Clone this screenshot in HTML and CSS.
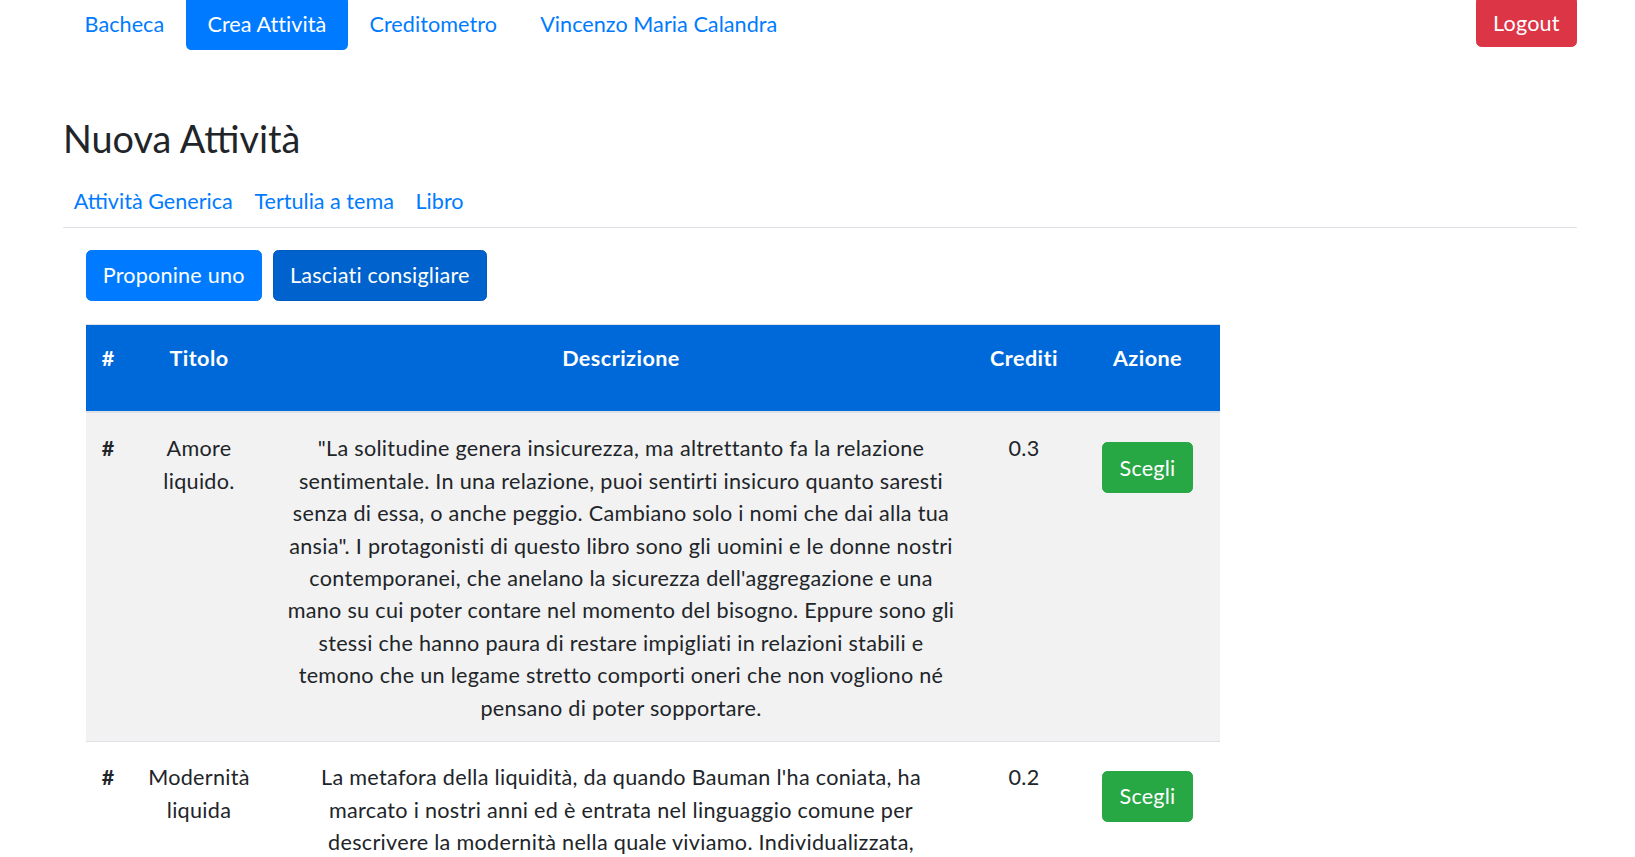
FILE: index.html
```html
<!DOCTYPE html>
<html lang="it">
<head>
<meta charset="utf-8">
<title>Nuova Attività</title>
<link rel="stylesheet" href="styles.css">
</head>
<body>
<div class="page">
  <header class="topbar">
    <nav class="mainnav">
      <a class="navlink" href="#">Bacheca</a>
      <a class="navlink active" href="#">Crea Attività</a>
      <a class="navlink" href="#">Creditometro</a>
      <a class="navlink" href="#">Vincenzo Maria Calandra</a>
    </nav>
    <a class="btn btn-danger" href="#">Logout</a>
  </header>

  <h2 class="title">Nuova Attività</h2>

  <nav class="tabs">
    <a class="tab" href="#">Attività Generica</a>
    <a class="tab" href="#">Tertulia a tema</a>
    <a class="tab" href="#">Libro</a>
  </nav>

  <section class="tabcontent">
    <div class="actions">
      <a class="btn btn-primary" href="#">Proponine uno</a>
      <a class="btn btn-primary pressed" href="#">Lasciati consigliare</a>
    </div>

    <table class="books">
      <colgroup>
        <col class="c-num"><col class="c-title"><col class="c-desc"><col class="c-cred"><col class="c-act">
      </colgroup>
      <thead>
        <tr>
          <th class="left">#</th>
          <th>Titolo</th>
          <th>Descrizione</th>
          <th>Crediti</th>
          <th>Azione</th>
        </tr>
      </thead>
      <tbody>
        <tr class="odd">
          <td class="left bold">#</td>
          <td>Amore liquido.</td>
          <td>"La solitudine genera insicurezza, ma altrettanto fa la relazione sentimentale. In una relazione, puoi sentirti insicuro quanto saresti senza di essa, o anche peggio. Cambiano solo i nomi che dai alla tua ansia". I protagonisti di questo libro sono gli uomini e le donne nostri contemporanei, che anelano la sicurezza dell'aggregazione e una mano su cui poter contare nel momento del bisogno. Eppure sono gli stessi che hanno paura di restare impigliati in relazioni stabili e temono che un legame stretto comporti oneri che non vogliono né pensano di poter sopportare.</td>
          <td>0.3</td>
          <td><a class="btn btn-success" href="#">Scegli</a></td>
        </tr>
        <tr>
          <td class="left bold">#</td>
          <td>Modernità liquida</td>
          <td>La metafora della liquidità, da quando Bauman l'ha coniata, ha marcato i nostri anni ed è entrata nel linguaggio comune per descrivere la modernità nella quale viviamo. Individualizzata, privatizzata, incerta, flessibile, vulnerabile: la modernità liquida è un'epoca in cui le forme sociali si dissolvono più in fretta di quanto se ne creino di nuove.</td>
          <td>0.2</td>
          <td><a class="btn btn-success" href="#">Scegli</a></td>
        </tr>
      </tbody>
    </table>
  </section>
</div>
</body>
</html>
```

FILE: styles.css
```css
* { box-sizing: border-box; }

html, body {
  margin: 0;
  padding: 0;
  background: #ffffff;
}

body {
  font-family: "Segoe UI", Lato, "Noto Sans", sans-serif;
  font-size: 21.6px;
  line-height: 1.5;
  color: #212529;
}

a { text-decoration: none; }

.page {
  padding: 0 58px 40px 63px;
}

/* top bar */
.topbar {
  display: flex;
  justify-content: space-between;
  align-items: flex-start;
  margin-top: -4px;
}

.mainnav {
  display: flex;
}

.navlink {
  display: block;
  padding: 12.3px 21.6px 9.3px;
  color: #007bff;
  border-radius: 5.4px;
  letter-spacing: 0.05px;
}

.navlink.active {
  background: #007bff;
  color: #ffffff;
}

/* buttons */
.btn {
  display: inline-block;
  padding: 8.1px 16.2px;
  border: 1.35px solid transparent;
  border-radius: 5.4px;
  color: #ffffff;
  font-size: 21.6px;
  line-height: 32.4px;
  text-align: center;
  vertical-align: middle;
  letter-spacing: 0.2px;
}

.topbar .btn {
  padding-top: 9.6px;
  padding-bottom: 6.6px;
}

.btn-danger { background: #dc3545; border-color: #dc3545; }
.btn-primary { background: #007bff; border-color: #007bff; }
.btn-primary.pressed { background: #0062cc; border-color: #005cbf; }
.btn-success { background: #28a745; border-color: #28a745; }

/* heading */
.title {
  margin: 66.5px 0 0;
  font-size: 37.8px;
  line-height: 1.2;
  font-weight: 400;
}

/* tabs */
.tabs {
  display: flex;
  margin-top: 12.3px;
  border-bottom: 1.35px solid #dee2e6;
}

.tab {
  display: block;
  padding: 10.8px 10.8px 9.8px;
  color: #007bff;
}

/* tab content */
.tabcontent {
  padding-left: 22.5px;
}

.actions {
  display: flex;
  gap: 11px;
  margin-top: 22px;
}

/* table */
.books {
  margin-top: 23px;
  width: 1134.5px;
  border-collapse: collapse;
  table-layout: fixed;
}

.c-num { width: 43.5px; }
.c-title { width: 140px; }
.c-desc { width: 704px; }
.c-cred { width: 102px; }
.c-act { width: 145px; }

.books th {
  background: #0069d9;
  color: #ffffff;
  font-weight: 700;
  text-align: center;
  vertical-align: top;
  padding: 17px 16.2px 37.2px;
  border-top: 1.35px solid #dee2e6;
  border-bottom: 2px solid #dee2e6;
  letter-spacing: 0.45px;
}

.books td {
  text-align: center;
  vertical-align: top;
  padding: 19.2px 16.2px 17.2px;
  border-top: 1.35px solid #dee2e6;
  letter-spacing: 0.3px;
}

.books .left { text-align: left; }
.books .bold { font-weight: 700; }

.books tr.odd td { background: #f2f2f2; }

.books td .btn {
  margin-top: 10px;
}
```
